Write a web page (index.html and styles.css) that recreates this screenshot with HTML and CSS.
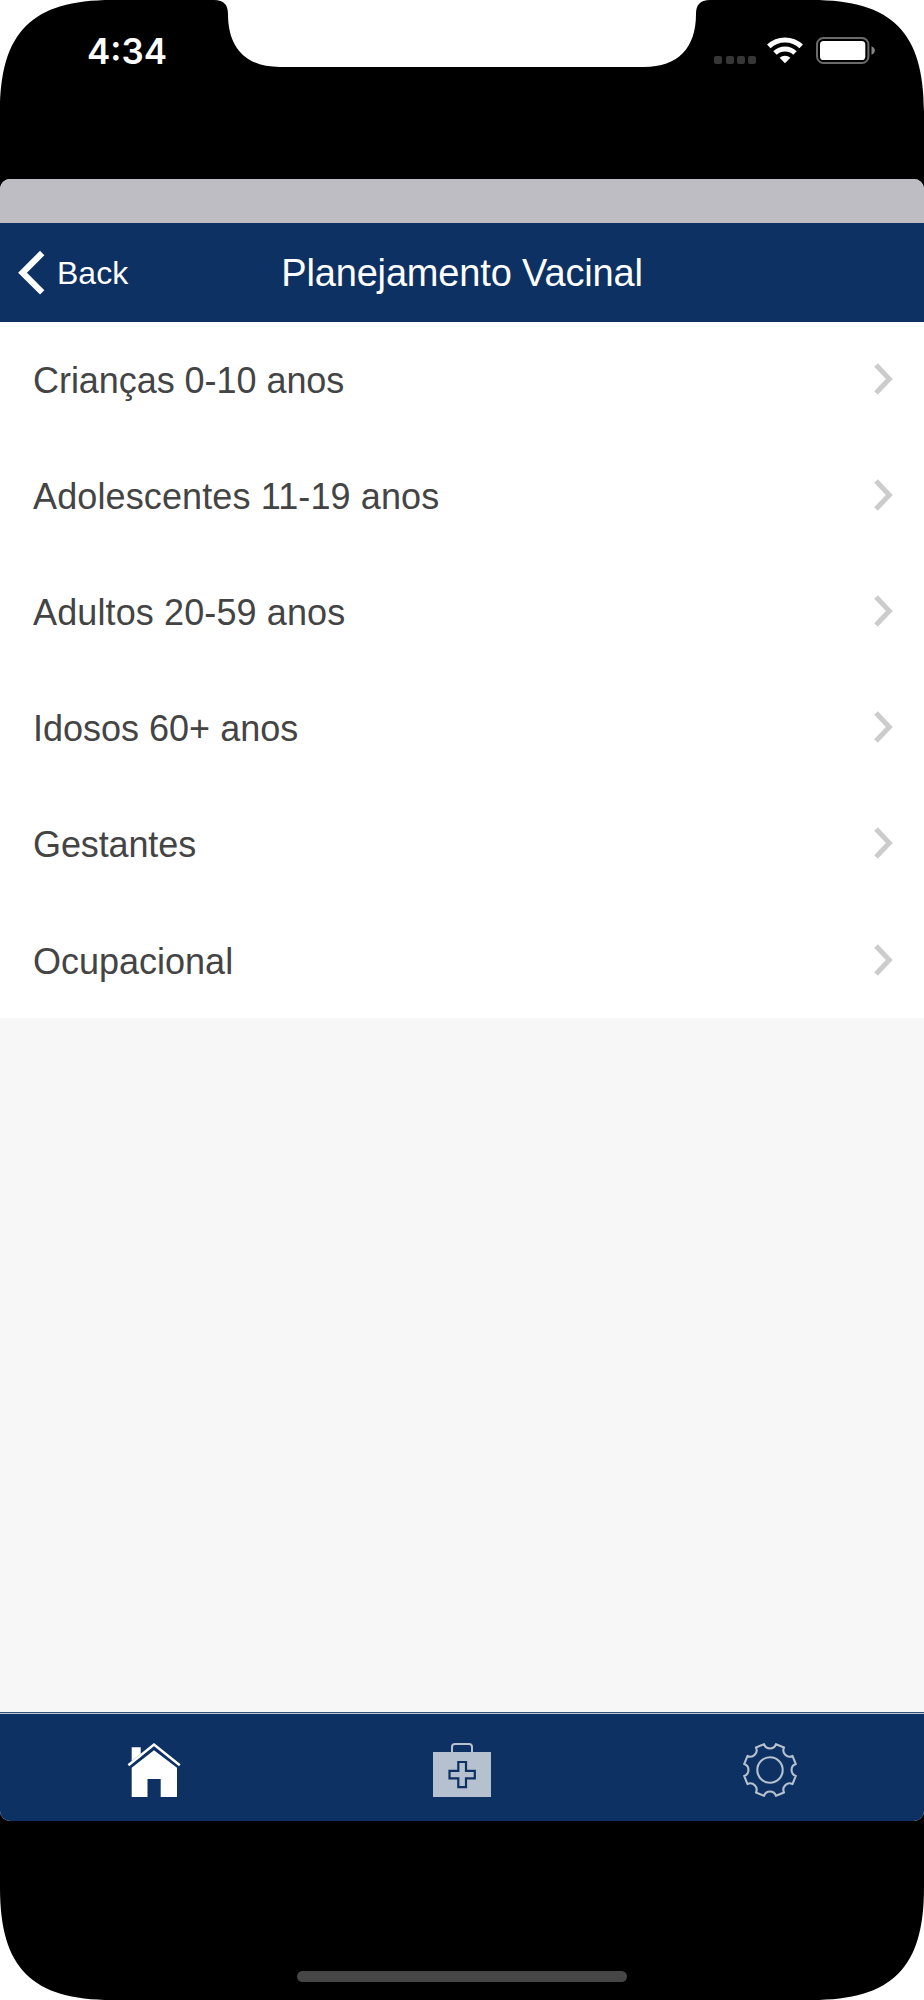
FILE: index.html
```html
<!DOCTYPE html>
<html lang="pt">
<head>
<meta charset="utf-8">
<title>Planejamento Vacinal</title>
<link rel="stylesheet" href="styles.css">
</head>
<body>
<div class="phone">
  <header class="status">
    <span class="clock">4:34</span>
    <div class="indicators">
      <span class="dots"><i></i><i></i><i></i><i></i></span>
      <svg class="wifi" width="36" height="27" viewBox="0 0 36 27">
        <g fill="none" stroke="#fff" stroke-width="5">
          <path d="M1.8 9.4A23.4 23.4 0 0 1 34.2 9.4"/>
          <path d="M8 16A14.5 14.5 0 0 1 28 16"/>
        </g>
        <path d="M12.6 20.8A7.8 7.8 0 0 1 23.4 20.8L18 26.3Z" fill="#fff"/>
      </svg>
      <svg class="battery" width="60" height="28" viewBox="0 0 60 28">
        <rect x="1" y="1" width="51.4" height="25" rx="6.5" fill="none" stroke="#6b6b6b" stroke-width="2"/>
        <rect x="4" y="4" width="45.3" height="19" rx="3.6" fill="#fff"/>
        <path d="M55.5 9.3Q58.8 10.5 58.8 13.5T55.5 17.8Z" fill="#858585"/>
      </svg>
    </div>
  </header>
  <main class="app">
    <div class="strip"></div>
    <nav class="navbar">
      <a class="back">
        <svg width="28" height="46" viewBox="0 0 28 46"><path d="M24.2 3L4.5 22.7L24.2 42.4" fill="none" stroke="#fff" stroke-width="6.2"/></svg>
        <span class="back-label">Back</span>
      </a>
      <h1 class="title">Planejamento Vacinal</h1>
    </nav>
    <ul class="list">
      <li class="row"><span class="label l1">Crianças 0-10 anos</span><svg class="chevron" width="20" height="36" viewBox="0 0 20 36"><path d="M3 4L16.3 18L3 32"/></svg></li>
      <li class="row"><span class="label l2">Adolescentes 11-19 anos</span><svg class="chevron" width="20" height="36" viewBox="0 0 20 36"><path d="M3 4L16.3 18L3 32"/></svg></li>
      <li class="row"><span class="label l3">Adultos 20-59 anos</span><svg class="chevron" width="20" height="36" viewBox="0 0 20 36"><path d="M3 4L16.3 18L3 32"/></svg></li>
      <li class="row"><span class="label">Idosos 60+ anos</span><svg class="chevron" width="20" height="36" viewBox="0 0 20 36"><path d="M3 4L16.3 18L3 32"/></svg></li>
      <li class="row"><span class="label l5">Gestantes</span><svg class="chevron" width="20" height="36" viewBox="0 0 20 36"><path d="M3 4L16.3 18L3 32"/></svg></li>
      <li class="row"><span class="label">Ocupacional</span><svg class="chevron" width="20" height="36" viewBox="0 0 20 36"><path d="M3 4L16.3 18L3 32"/></svg></li>
    </ul>
    <footer class="tabs">
      <a class="tab">
        <svg width="60" height="60" viewBox="0 0 60 60">
          <path d="M4.4 25.2L30 4.6L55.8 25.2" fill="none" stroke="#fff" stroke-width="2.6"/>
          <path d="M7.7 7.3H16.7V13.8L7.7 21Z" fill="#fff"/>
          <path d="M7.7 57V27.8L30 10.2L53 27.8V57H36.7V39H23.5V57Z" fill="#fff"/>
        </svg>
      </a>
      <a class="tab">
        <svg width="60" height="60" viewBox="0 0 60 60">
          <path d="M20 12V7Q20 4 23 4H37Q40 4 40 7V12" fill="none" stroke="#b6c1cf" stroke-width="2"/>
          <rect x="1" y="12" width="58" height="45" fill="#b6c1cf"/>
          <path d="M26.3 22H34V30.8H42.8V38.4H34V47.2H26.3V38.4H17.5V30.8H26.3Z" fill="none" stroke="#0d3163" stroke-width="2.2"/>
        </svg>
      </a>
      <a class="tab">
        <svg width="60" height="60" viewBox="0 0 60 60">
          <g transform="translate(30 30)" fill="none" stroke="#b6c1cf" stroke-width="2.1" stroke-linejoin="round">
            <circle r="12.7"/>
            <path d="M-5.96-25.82A6.3 6.3 0 0 0 5.96-25.82L14.04-22.47A6.3 6.3 0 0 0 22.47-14.04L25.82-5.96A6.3 6.3 0 0 0 25.82 5.96L22.47 14.04A6.3 6.3 0 0 0 14.04 22.47L5.96 25.82A6.3 6.3 0 0 0-5.96 25.82L-14.04 22.47A6.3 6.3 0 0 0-22.47 14.04L-25.82 5.96A6.3 6.3 0 0 0-25.82-5.96L-22.47-14.04A6.3 6.3 0 0 0-14.04-22.47Z"/>
          </g>
        </svg>
      </a>
    </footer>
  </main>
  <div class="home-area"><div class="home-bar"></div></div>
</div>
</body>
</html>
```

FILE: styles.css
```css
* { box-sizing: border-box; }

body {
  margin: 0;
  background: #fff;
  font-family: "Liberation Sans", Arial, sans-serif;
}

.phone {
  width: 924px;
  height: 2000px;
  display: flex;
  flex-direction: column;
  background: #000;
  clip-path: path("M0 112C0 32 32 0 112 0H214C224 0 228 5 228 14C228 48 246 67 280 67H644C678 67 696 48 696 14C696 5 700 0 710 0H812C892 0 924 32 924 112V1888C924 1968 892 2000 812 2000H112C32 2000 0 1968 0 1888Z");
}

.status {
  height: 178.6px;
  padding: 30px 48px 0 87px;
  display: flex;
  justify-content: space-between;
  align-items: flex-start;
}

.clock {
  font: 600 35px/42px Inter, sans-serif;
  color: #fff;
}

.indicators { display: flex; padding-top: 7px; }
.dots { display: flex; gap: 3.2px; padding-top: 19px; margin-right: 11px; }
.dots i { width: 8px; height: 7.5px; border-radius: 2px; background: #363636; }
.wifi { margin-right: 13px; }

.app {
  height: 1642.4px;
  display: flex;
  flex-direction: column;
  border-radius: 10px;
  overflow: hidden;
  background: #f7f7f7;
}

.strip { height: 44.7px; background: #bebdc3; }

.navbar {
  height: 98.3px;
  padding-top: 1px;
  display: grid;
  grid-template-columns: 1fr auto 1fr;
  align-items: center;
  background: #0d3163;
  color: #fff;
}

.back {
  display: flex;
  align-items: center;
  gap: 11px;
  padding-left: 18px;
  font-size: 32px;
}

.back-label { padding-top: 2px; }

.title { margin: 0; font-size: 38px; font-weight: 400; letter-spacing: -0.16px; padding-top: 1px; }

.list { margin: 0; padding: 0; list-style: none; background: #fff; }

.row {
  height: 116.08px;
  padding: 0 31px 1px 33px;
  display: flex;
  align-items: center;
  justify-content: space-between;
}

.label { font-size: 36px; line-height: 42px; color: #444; padding-top: 4px; white-space: nowrap; }
.l1 { letter-spacing: -0.05px; }
.l2, .l3 { letter-spacing: 0.12px; }
.l5 { letter-spacing: -0.12px; }

.chevron path { fill: none; stroke: #ccc; stroke-width: 5; }

.tabs {
  height: 109px;
  margin-top: auto;
  padding-top: 3px;
  display: grid;
  grid-template-columns: repeat(3, 1fr);
  background: linear-gradient(#31507b 0 1px, #bfc4cc 1px 2px, #0d3163 2px);
}

.tab { display: flex; justify-content: center; align-items: center; padding-top: 5px; }

.home-area {
  flex: 1;
  display: flex;
  justify-content: center;
  align-items: flex-end;
  padding-bottom: 18px;
}

.home-bar { width: 330px; height: 11px; border-radius: 6px; background: #464646; }
```
